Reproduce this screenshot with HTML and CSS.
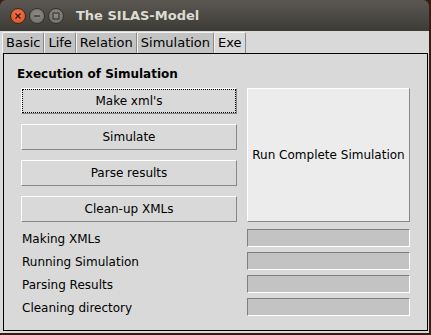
FILE: index.html
```html
<!DOCTYPE html>
<html>
<head>
<meta charset="utf-8">
<link rel="stylesheet" href="styles.css">
</head>
<body>
<div class="window">
  <div class="titlebar">
    <div class="wbtns">
      <span class="wb close"><svg width="8" height="8" viewBox="0 0 8 8"><path d="M1.5 1.5L6.5 6.5M6.5 1.5L1.5 6.5" stroke="#3a1a10" stroke-width="1.4"/></svg></span>
      <span class="wb min"><svg width="8" height="8" viewBox="0 0 8 8"><path d="M1 4H7" stroke="#3c3b37" stroke-width="1.4"/></svg></span>
      <span class="wb max"><svg width="8" height="8" viewBox="0 0 8 8"><rect x="1" y="1" width="6" height="6" fill="none" stroke="#3c3b37" stroke-width="1.2"/></svg></span>
    </div>
    <div class="title">The SILAS-Model</div>
  </div>
  <div class="client">
    <div class="tabs">
      <div class="tab">Basic</div>
      <div class="tab">Life</div>
      <div class="tab">Relation</div>
      <div class="tab">Simulation</div>
      <div class="tab active">Exe</div>
    </div>
    <div class="pane">
      <div class="heading">Execution of Simulation</div>
      <div class="grid">
        <div class="btns">
          <div class="btn focus"><span>Make xml's</span></div>
          <div class="btn"><span>Simulate</span></div>
          <div class="btn"><span>Parse results</span></div>
          <div class="btn"><span>Clean-up XMLs</span></div>
        </div>
        <div class="bigbtn">Run Complete Simulation</div>
        <div class="status">
          <div class="row"><span class="lbl">Making XMLs</span><div class="bar"></div></div>
          <div class="row"><span class="lbl">Running Simulation</span><div class="bar"></div></div>
          <div class="row"><span class="lbl">Parsing Results</span><div class="bar"></div></div>
          <div class="row"><span class="lbl">Cleaning directory</span><div class="bar"></div></div>
        </div>
      </div>
    </div>
  </div>
</div>
</body>
</html>
```
FILE: styles.css
```css
html, body {
  margin: 0;
  padding: 0;
  background: #3b1c15;
  width: 431px;
  height: 335px;
  overflow: hidden;
}
.window {
  width: 429px;
  height: 333px;
  display: flex;
  flex-direction: column;
  border-radius: 6px 6px 0 0;
  overflow: hidden;
  font-family: "DejaVu Sans", sans-serif;
  color: #000;
}
.titlebar {
  height: 31px;
  flex: none;
  display: flex;
  align-items: center;
  background: linear-gradient(#5b5852, #3c3b36);
}
.wbtns {
  display: flex;
  gap: 3px;
  margin-left: 10px;
}
.wb {
  width: 16px;
  height: 16px;
  border-radius: 50%;
  display: flex;
  align-items: center;
  justify-content: center;
  box-sizing: border-box;
}
.wb.close {
  background: radial-gradient(circle at 50% 40%, #f47a4f, #d9481f);
  border: 1px solid #3a2a20;
}
.wb.min, .wb.max {
  background: radial-gradient(circle at 50% 40%, #8d8b84, #6e6c66);
  border: 1px solid #33322e;
}
.title {
  margin-left: 12px;
  color: #dfdbd2;
  font-weight: bold;
  font-size: 13px;
}
.client {
  flex: 1;
  background: #d9d9d9;
  display: flex;
  flex-direction: column;
  padding: 0 1px 2px 3px;
}
.tabs {
  display: flex;
  height: 22px;
  margin-left: -1px;
  flex: none;
  align-items: flex-end;
}
.tab {
  height: 21px;
  box-sizing: border-box;
  padding: 0 3px;
  background: #c3c3c3;
  border-top: 1px solid #f2f2f2;
  border-left: 1px solid #f2f2f2;
  border-right: 1px solid #8a8a8a;
  border-radius: 2px 2px 0 0;
  font-size: 13px;
  line-height: 20px;
}
.tab.active {
  background: #d9d9d9;
}
.pane {
  flex: 1;
  border: 1px solid #000;
  background: #d9d9d9;
  display: flex;
  flex-direction: column;
}
.heading {
  font-weight: bold;
  font-size: 12px;
  margin: 12px 0 0 13px;
  height: 16px;
  line-height: 16px;
}
.grid {
  display: grid;
  grid-template-columns: 216px 163px;
  column-gap: 10px;
  row-gap: 7px;
  margin: 6px 0 0 17px;
}
.btns {
  display: flex;
  flex-direction: column;
  gap: 10px;
}
.btn {
  height: 26px;
  box-sizing: border-box;
  background: #d9d9d9;
  border-top: 1px solid #ffffff;
  border-left: 1px solid #ffffff;
  border-right: 1px solid #888888;
  border-bottom: 1px solid #888888;
  display: flex;
  align-items: stretch;
  font-size: 12px;
}
.btn span {
  flex: 1;
  display: flex;
  align-items: center;
  justify-content: center;
  border: 1px dotted transparent;
}
.btn.focus span {
  border: 1px dotted #000;
}
.bigbtn {
  height: 134px;
  box-sizing: border-box;
  background: #ececec;
  border-top: 1px solid #ffffff;
  border-left: 1px solid #ffffff;
  border-right: 1px solid #888888;
  border-bottom: 1px solid #888888;
  display: flex;
  align-items: center;
  justify-content: center;
  font-size: 12px;
}
.status {
  grid-column: 1 / 3;
  display: flex;
  flex-direction: column;
  gap: 5px;
}
.row {
  display: grid;
  grid-template-columns: 216px 163px;
  column-gap: 10px;
  align-items: center;
  height: 18px;
}
.lbl {
  font-size: 12px;
  padding-left: 1px;
  padding-top: 1px;
}
.bar {
  height: 18px;
  box-sizing: border-box;
  background: #c3c3c3;
  border-top: 1px solid #7f7f7f;
  border-left: 1px solid #7f7f7f;
  border-right: 1px solid #ffffff;
  border-bottom: 1px solid #ffffff;
}
```
